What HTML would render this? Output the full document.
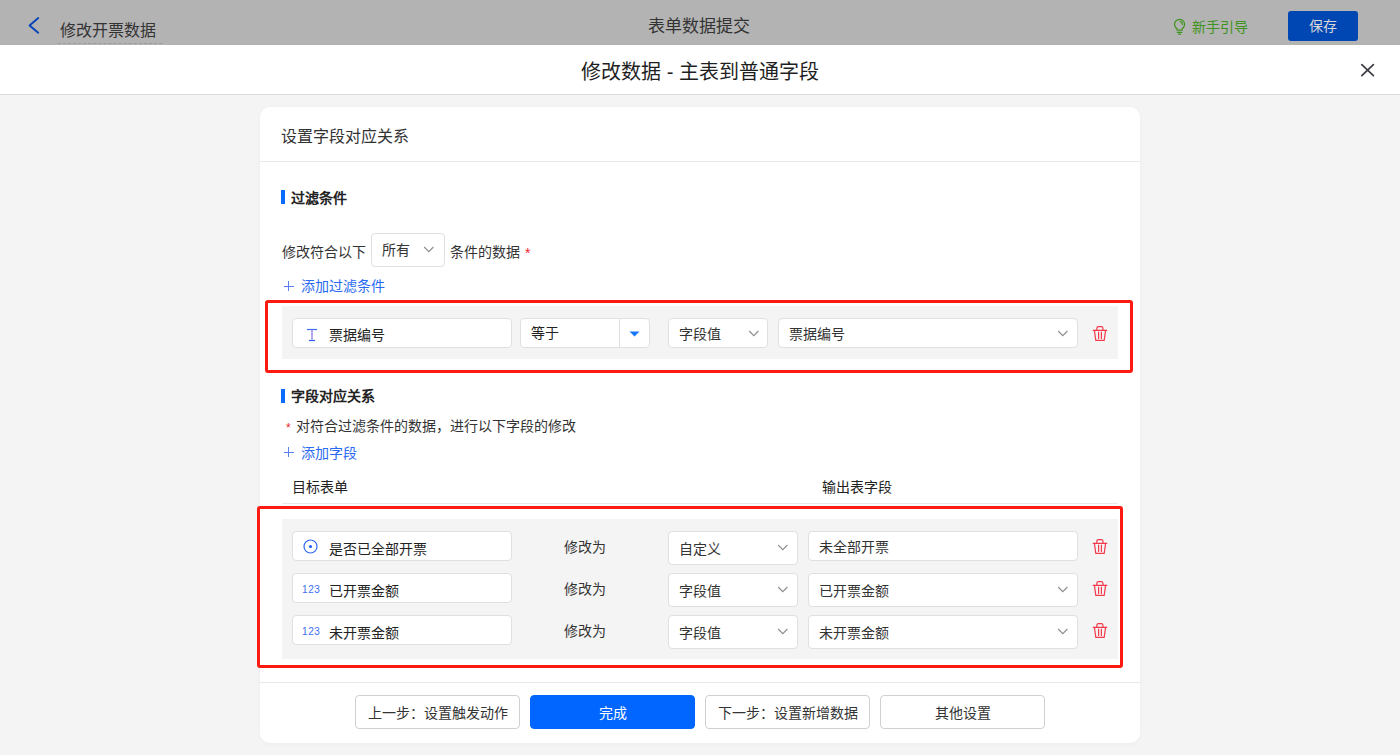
<!DOCTYPE html>
<html lang="zh-CN"><head><meta charset="utf-8">
<style>
*{margin:0;padding:0;box-sizing:border-box}
html,body{width:1400px;height:755px;overflow:hidden;background:#f4f4f4;font-family:"Liberation Sans",sans-serif;color:#333}
.a{position:absolute}
.hdr{left:0;top:0;width:1400px;height:45px;background:#b3b3b3}
.mt{left:0;top:45px;width:1400px;height:50px;background:#fff;border-bottom:1px solid #dcdcdc}
.card{left:260px;top:107px;width:880px;height:636px;background:#fff;border-radius:10px;box-shadow:0 1px 4px rgba(0,0,0,0.03)}
.t{white-space:nowrap;line-height:1;margin-top:1px}
.inp{background:#fff;border:1px solid #e0e0e0;border-radius:4px}
.gray{background:#f4f4f4}
.red{border:3px solid #ff1a12;border-radius:3px}
.chev{width:7px;height:7px;border-right:1px solid #888;border-bottom:1px solid #888;transform:rotate(45deg)}
.btn{border:1px solid #d0d0d0;border-radius:4px;background:#fff;font-size:14px;color:#333;text-align:center;line-height:32px;padding-top:1px}
</style></head><body>
<!-- header -->
<div class="a hdr"></div>
<svg class="a" style="left:20px;top:10px" width="30" height="30" viewBox="0 0 30 30"><path d="M18.2 8.1 L9.6 15.4 L18.2 22.7" fill="none" stroke="#0a45b8" stroke-width="2" stroke-linecap="round" stroke-linejoin="round"/></svg>
<div class="a t" style="left:60px;top:22px;font-size:16px;color:#333">修改开票数据</div>
<div class="a" style="left:58px;top:43px;width:104px;border-top:1px dashed #9a9a9a"></div>
<div class="a t" style="left:648px;top:17px;font-size:17px;color:#333">表单数据提交</div>
<svg class="a" style="left:1165px;top:12px" width="30" height="28" viewBox="0 0 30 28"><g fill="none" stroke="#3f9420" stroke-width="1.2" stroke-linecap="round"><path d="M12 18.2V16.7A5.05 5.05 0 1 1 17.1 16.7V18.2Z"/><path d="M12.3 20.4H16.8M13.6 22.2H15.5"/><path d="M15.1 9.6A3 3 0 0 1 17.5 12.4"/></g></svg>
<div class="a t" style="left:1192px;top:19px;font-size:14px;color:#3f9420">新手引导</div>
<div class="a t" style="left:1288px;top:10px;width:70px;height:30px;border-radius:3px;background:#0047b3;color:#d8d8d8;font-size:14px;line-height:30px;text-align:center">保存</div>
<!-- modal title -->
<div class="a mt"></div>
<div class="a t" style="left:0;top:61px;width:1400px;text-align:center;font-size:20px;color:#1f1f1f">修改数据 - 主表到普通字段</div>
<svg class="a" style="left:1360px;top:63px" width="15" height="15" viewBox="0 0 15 15"><path d="M1.8 1.6L13.4 12.6M13.4 1.6L1.8 12.6" stroke="#3c3c44" stroke-width="1.7" stroke-linecap="round"/></svg>
<!-- card -->
<div class="a card"></div>
<div class="a t" style="left:281px;top:128px;font-size:16px;color:#333">设置字段对应关系</div>
<div class="a" style="left:260px;top:161px;width:880px;height:1px;background:#e8e8e8"></div>

<div class="a" style="left:281px;top:190px;width:4px;height:14px;background:#0a6cff"></div>
<div class="a t" style="left:291px;top:190px;font-size:14px;font-weight:bold;color:#222">过滤条件</div>

<div class="a t" style="left:282px;top:244px;font-size:14px;color:#333">修改符合以下</div>
<div class="a inp" style="left:371px;top:233px;width:74px;height:34px"></div>
<div class="a t" style="left:382px;top:242px;font-size:14px;color:#333">所有</div>
<svg class="a" style="left:423px;top:246px" width="12" height="7" viewBox="0 0 12 7"><path d="M1.2 1L5.8 5.6L10.4 1" fill="none" stroke="#8c8c8c" stroke-width="1.1"/></svg>
<div class="a t" style="left:450px;top:244px;font-size:14px;color:#333">条件的数据</div>
<div class="a t" style="left:525px;top:245px;font-size:14px;color:#f5222d">*</div>

<svg class="a" style="left:284px;top:281px" width="10" height="10" viewBox="0 0 10 10"><path d="M4.5 0V10M0 5.5H10" stroke="#5a80f0" stroke-width="1"/></svg>
<div class="a t" style="left:301px;top:278px;font-size:14px;color:#2a6af2">添加过滤条件</div>

<!-- red box 1 -->
<div class="a red" style="left:265px;top:300px;width:868px;height:73px"></div>
<div class="a gray" style="left:282px;top:306px;width:836px;height:53px"></div>
<div class="a inp" style="left:292px;top:318px;width:220px;height:30px"></div>
<svg class="a" style="left:306px;top:328px" width="12" height="14" viewBox="0 0 12 14"><path d="M1 1.5H11" stroke="#3d6df5" stroke-width="1.2"/><path d="M6 1.5V11.8" stroke="#8f74f2" stroke-width="1.3"/><path d="M3 12.5H9" stroke="#2f5ee8" stroke-width="1.2"/></svg>
<div class="a t" style="left:329px;top:327px;font-size:14px;color:#222">票据编号</div>
<div class="a inp" style="left:520px;top:318px;width:130px;height:30px"></div>
<div class="a" style="left:619px;top:319px;width:1px;height:28px;background:#e0e0e0"></div>
<svg class="a" style="left:629px;top:331px" width="11" height="6" viewBox="0 0 11 6"><path d="M0.5 0.5H10.5L5.5 5.5z" fill="#1677ff"/></svg>
<div class="a t" style="left:531px;top:325px;font-size:14px;color:#222">等于</div>
<div class="a inp" style="left:668px;top:318px;width:100px;height:30px"></div>
<div class="a t" style="left:679px;top:326px;font-size:14px;color:#333">字段值</div>
<svg class="a" style="left:748px;top:330px" width="12" height="7" viewBox="0 0 12 7"><path d="M1.2 1L5.8 5.6L10.4 1" fill="none" stroke="#8c8c8c" stroke-width="1.1"/></svg>
<div class="a inp" style="left:778px;top:318px;width:300px;height:30px"></div>
<div class="a t" style="left:789px;top:326px;font-size:14px;color:#333">票据编号</div>
<svg class="a" style="left:1057px;top:330px" width="12" height="7" viewBox="0 0 12 7"><path d="M1.2 1L5.8 5.6L10.4 1" fill="none" stroke="#8c8c8c" stroke-width="1.1"/></svg>
<svg class="a trash" style="left:1092px;top:325px" width="16" height="17" viewBox="0 0 16 17"><g fill="none" stroke="#f23a4c" stroke-width="1.2" stroke-linecap="round" stroke-linejoin="round"><path d="M4.8 5V3.4a1.8 1.8 0 0 1 1.8-1.8h2.6a1.8 1.8 0 0 1 1.8 1.8V5"/><path d="M1.2 5.3H14.8"/><path d="M2.4 5.3L3.8 15.4H12.2L13.6 5.3"/><path d="M6.6 7.2V13.4M9.4 7.2V13.4"/></g></svg>

<!-- section 2 -->
<div class="a" style="left:281px;top:389px;width:4px;height:14px;background:#0a6cff"></div>
<div class="a t" style="left:291px;top:388px;font-size:14px;font-weight:bold;color:#222">字段对应关系</div>
<div class="a t" style="left:286px;top:421px;font-size:12px;color:#f5222d">*</div>
<div class="a t" style="left:296px;top:418px;font-size:14px;color:#333">对符合过滤条件的数据，进行以下字段的修改</div>
<svg class="a" style="left:284px;top:447px" width="10" height="10" viewBox="0 0 10 10"><path d="M4.5 0V10M0 5.5H10" stroke="#5a80f0" stroke-width="1"/></svg>
<div class="a t" style="left:301px;top:445px;font-size:14px;color:#2a6af2">添加字段</div>
<div class="a t" style="left:292px;top:479px;font-size:14px;color:#222">目标表单</div>
<div class="a t" style="left:822px;top:479px;font-size:14px;color:#222">输出表字段</div>
<div class="a" style="left:282px;top:503px;width:836px;height:1px;background:#e8e8e8"></div>

<!-- red box 2 -->
<div class="a red" style="left:257px;top:506px;width:866px;height:162px"></div>
<div class="a gray" style="left:282px;top:519px;width:836px;height:140px"></div>

<div class="a inp" style="left:292px;top:531px;width:220px;height:30px"></div>
<svg class="a" style="left:303px;top:539px" width="15" height="15" viewBox="0 0 15 15"><circle cx="7.5" cy="7.5" r="6.5" fill="none" stroke="#3068f8" stroke-width="1.2"/><circle cx="7.5" cy="7.5" r="1.6" fill="#1f5ffa"/></svg>
<div class="a t" style="left:329px;top:541px;font-size:14px;color:#222">是否已全部开票</div>
<div class="a t" style="left:564px;top:539px;font-size:14px;color:#333">修改为</div>
<div class="a inp" style="left:668px;top:531px;width:130px;height:34px"></div>
<div class="a t" style="left:679px;top:541px;font-size:14px;color:#333">自定义</div>
<svg class="a" style="left:777px;top:544px" width="12" height="7" viewBox="0 0 12 7"><path d="M1.2 1L5.8 5.6L10.4 1" fill="none" stroke="#8c8c8c" stroke-width="1.1"/></svg>
<div class="a inp" style="left:808px;top:531px;width:270px;height:30px"></div>
<div class="a t" style="left:819px;top:539px;font-size:14px;color:#333">未全部开票</div>
<svg class="a" style="left:1092px;top:538px" width="16" height="17" viewBox="0 0 16 17"><g fill="none" stroke="#f23a4c" stroke-width="1.2" stroke-linecap="round" stroke-linejoin="round"><path d="M4.8 5V3.4a1.8 1.8 0 0 1 1.8-1.8h2.6a1.8 1.8 0 0 1 1.8 1.8V5"/><path d="M1.2 5.3H14.8"/><path d="M2.4 5.3L3.8 15.4H12.2L13.6 5.3"/><path d="M6.6 7.2V13.4M9.4 7.2V13.4"/></g></svg>

<div class="a inp" style="left:292px;top:573px;width:220px;height:30px"></div>
<div class="a t" style="left:302px;top:584px;font-size:10px;letter-spacing:0.6px;font-family:'Liberation Sans';color:#3d6df5">123</div>
<div class="a t" style="left:329px;top:583px;font-size:14px;color:#222">已开票金额</div>
<div class="a t" style="left:564px;top:581px;font-size:14px;color:#333">修改为</div>
<div class="a inp" style="left:668px;top:573px;width:130px;height:34px"></div>
<div class="a t" style="left:679px;top:583px;font-size:14px;color:#333">字段值</div>
<svg class="a" style="left:777px;top:586px" width="12" height="7" viewBox="0 0 12 7"><path d="M1.2 1L5.8 5.6L10.4 1" fill="none" stroke="#8c8c8c" stroke-width="1.1"/></svg>
<div class="a inp" style="left:808px;top:573px;width:270px;height:34px"></div>
<div class="a t" style="left:819px;top:583px;font-size:14px;color:#333">已开票金额</div>
<svg class="a" style="left:1057px;top:586px" width="12" height="7" viewBox="0 0 12 7"><path d="M1.2 1L5.8 5.6L10.4 1" fill="none" stroke="#8c8c8c" stroke-width="1.1"/></svg>
<svg class="a" style="left:1092px;top:580px" width="16" height="17" viewBox="0 0 16 17"><g fill="none" stroke="#f23a4c" stroke-width="1.2" stroke-linecap="round" stroke-linejoin="round"><path d="M4.8 5V3.4a1.8 1.8 0 0 1 1.8-1.8h2.6a1.8 1.8 0 0 1 1.8 1.8V5"/><path d="M1.2 5.3H14.8"/><path d="M2.4 5.3L3.8 15.4H12.2L13.6 5.3"/><path d="M6.6 7.2V13.4M9.4 7.2V13.4"/></g></svg>

<div class="a inp" style="left:292px;top:615px;width:220px;height:30px"></div>
<div class="a t" style="left:302px;top:626px;font-size:10px;letter-spacing:0.6px;font-family:'Liberation Sans';color:#3d6df5">123</div>
<div class="a t" style="left:329px;top:625px;font-size:14px;color:#222">未开票金额</div>
<div class="a t" style="left:564px;top:623px;font-size:14px;color:#333">修改为</div>
<div class="a inp" style="left:668px;top:615px;width:130px;height:34px"></div>
<div class="a t" style="left:679px;top:625px;font-size:14px;color:#333">字段值</div>
<svg class="a" style="left:777px;top:628px" width="12" height="7" viewBox="0 0 12 7"><path d="M1.2 1L5.8 5.6L10.4 1" fill="none" stroke="#8c8c8c" stroke-width="1.1"/></svg>
<div class="a inp" style="left:808px;top:615px;width:270px;height:34px"></div>
<div class="a t" style="left:819px;top:625px;font-size:14px;color:#333">未开票金额</div>
<svg class="a" style="left:1057px;top:628px" width="12" height="7" viewBox="0 0 12 7"><path d="M1.2 1L5.8 5.6L10.4 1" fill="none" stroke="#8c8c8c" stroke-width="1.1"/></svg>
<svg class="a" style="left:1092px;top:622px" width="16" height="17" viewBox="0 0 16 17"><g fill="none" stroke="#f23a4c" stroke-width="1.2" stroke-linecap="round" stroke-linejoin="round"><path d="M4.8 5V3.4a1.8 1.8 0 0 1 1.8-1.8h2.6a1.8 1.8 0 0 1 1.8 1.8V5"/><path d="M1.2 5.3H14.8"/><path d="M2.4 5.3L3.8 15.4H12.2L13.6 5.3"/><path d="M6.6 7.2V13.4M9.4 7.2V13.4"/></g></svg>

<!-- footer -->
<div class="a" style="left:260px;top:682px;width:880px;height:1px;background:#e8e8e8"></div>
<div class="a btn" style="left:355px;top:695px;width:165px;height:34px">上一步：设置触发动作</div>
<div class="a btn" style="left:530px;top:695px;width:165px;height:34px;background:#0066ff;border-color:#0066ff;color:#fff">完成</div>
<div class="a btn" style="left:705px;top:695px;width:165px;height:34px">下一步：设置新增数据</div>
<div class="a btn" style="left:880px;top:695px;width:165px;height:34px">其他设置</div>
</body></html>
